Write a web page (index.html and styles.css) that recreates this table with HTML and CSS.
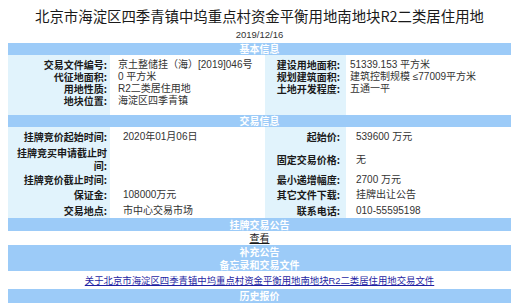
FILE: index.html
```html
<!DOCTYPE html>
<html lang="zh-CN">
<head>
<meta charset="utf-8">
<title>北京市海淀区四季青镇中坞重点村资金平衡用地南地块R2二类居住用地</title>
<link rel="stylesheet" href="styles.css">
</head>
<body>
<div class="page">
  <h1 class="title">北京市海淀区四季青镇中坞重点村资金平衡用地南地块R2二类居住用地</h1>
  <div class="date">2019/12/16</div>

  <div class="bar">基本信息</div>
  <div class="basic">
    <div class="col label c1">
      <div>交易文件编号:</div>
      <div>代征地面积:</div>
      <div>用地性质:</div>
      <div>地块位置:</div>
    </div>
    <div class="col value c2">
      <div>京土整储挂（海）[2019]046号</div>
      <div>0 平方米</div>
      <div>R2二类居住用地</div>
      <div>海淀区四季青镇</div>
    </div>
    <div class="col label c3">
      <div>建设用地面积:</div>
      <div>规划建筑面积:</div>
      <div>土地开发程度:</div>
    </div>
    <div class="col value c4">
      <div>51339.153 平方米</div>
      <div>建筑控制规模 ≤77009平方米</div>
      <div>五通一平</div>
    </div>
  </div>

  <div class="bar">交易信息</div>
  <div class="trade">
    <div class="cell label">挂牌竞价起始时间:</div>
    <div class="cell value v1">2020年01月06日</div>
    <div class="cell label">起始价:</div>
    <div class="cell value v2">539600 万元</div>

    <div class="cell label wrap">挂牌竞买申请截止时间:</div>
    <div class="cell value v1"></div>
    <div class="cell label">固定交易价格:</div>
    <div class="cell value v2">无</div>

    <div class="cell label">挂牌竞价截止时间:</div>
    <div class="cell value v1"></div>
    <div class="cell label">最小递增幅度:</div>
    <div class="cell value v2">2700 万元</div>

    <div class="cell label">保证金:</div>
    <div class="cell value v1">108000万元</div>
    <div class="cell label">其它文件下载:</div>
    <div class="cell value v2">挂牌出让公告</div>

    <div class="cell label">交易地点:</div>
    <div class="cell value v1">市中心交易市场</div>
    <div class="cell label">联系电话:</div>
    <div class="cell value v2">010-55595198</div>
  </div>

  <div class="bar bar-13">挂牌交易公告</div>
  <div class="row-view"><a class="view" href="#">查看</a></div>
  <div class="bar bar-13">补充公告</div>
  <div class="bar bar-13">备忘录和交易文件</div>
  <div class="row-link"><a class="doc" href="#">关于北京市海淀区四季青镇中坞重点村资金平衡用地南地块R2二类居住用地交易文件</a></div>
  <div class="bar bar-14">历史报价</div>
</div>
</body>
</html>
```

FILE: styles.css
```css
html, body {
  margin: 0;
  padding: 0;
  background: #ffffff;
}

body {
  padding: 8px;
  font-family: "Liberation Sans", "Noto Sans CJK SC", sans-serif;
  font-size: 10px;
  color: #333333;
}

.page {
  width: 503px;
}

.title {
  margin: 0;
  font-family: "Noto Sans CJK SC", sans-serif;
  font-size: 14.4px;
  font-weight: normal;
  line-height: 16px;
  color: #1a1a1a;
  text-align: center;
  white-space: nowrap;
}

.date {
  margin-top: 3px;
  height: 16px;
  line-height: 16px;
  font-size: 9.5px;
  color: #333333;
  text-align: center;
}

.bar {
  height: 12px;
  line-height: 12px;
  background: #9ccbf8;
  color: #ffffff;
  font-weight: bold;
  text-align: center;
  font-family: "Noto Sans CJK SC", sans-serif;
  font-size: 10px;
}

.bar-13 {
  height: 13px;
  line-height: 13px;
}

.bar-14 {
  height: 14px;
  line-height: 14px;
}

.basic {
  display: flex;
  height: 60px;
}

.col {
  box-sizing: border-box;
  padding-top: 4px;
  line-height: 12px;
  white-space: nowrap;
}

.label {
  background: #e1f3fc;
  color: #1a1a1a;
  font-weight: bold;
  text-align: right;
  font-family: "Noto Sans CJK SC", sans-serif;
}

.value {
  color: #333333;
}

.c1 {
  width: 102px;
  padding-right: 3px;
}

.c2 {
  width: 155px;
  padding-left: 8px;
}

.c3 {
  width: 81px;
  padding-right: 6px;
}

.c4 {
  flex: 1;
  padding-left: 4px;
}

.trade {
  display: grid;
  grid-template-columns: 102px 155px 81px 1fr;
  grid-template-rows: 19px 26px 14px 16px 16px;
}

.cell {
  box-sizing: border-box;
  display: flex;
  align-items: center;
  line-height: 13px;
}

.cell.label {
  justify-content: flex-end;
  padding: 0 3px 0 8px;
}

.trade .cell.label:nth-child(4n+3) {
  padding-right: 6px;
}

.cell.wrap {
  white-space: normal;
  text-align: right;
}

.v1 {
  padding-left: 13px;
  white-space: nowrap;
}

.v2 {
  padding-left: 10px;
  white-space: nowrap;
}

.row-view {
  height: 14px;
  line-height: 14px;
  text-align: center;
}

.view {
  color: #1a1a1a;
  text-decoration: underline;
  font-family: "Noto Sans CJK SC", sans-serif;
}

.row-link {
  height: 18px;
  line-height: 20px;
  text-align: center;
}

.doc {
  color: #1f1fa3;
  font-size: 9.4px;
  text-decoration: underline;
  font-family: "Liberation Sans", "Noto Sans CJK SC", sans-serif;
  white-space: nowrap;
}
```
